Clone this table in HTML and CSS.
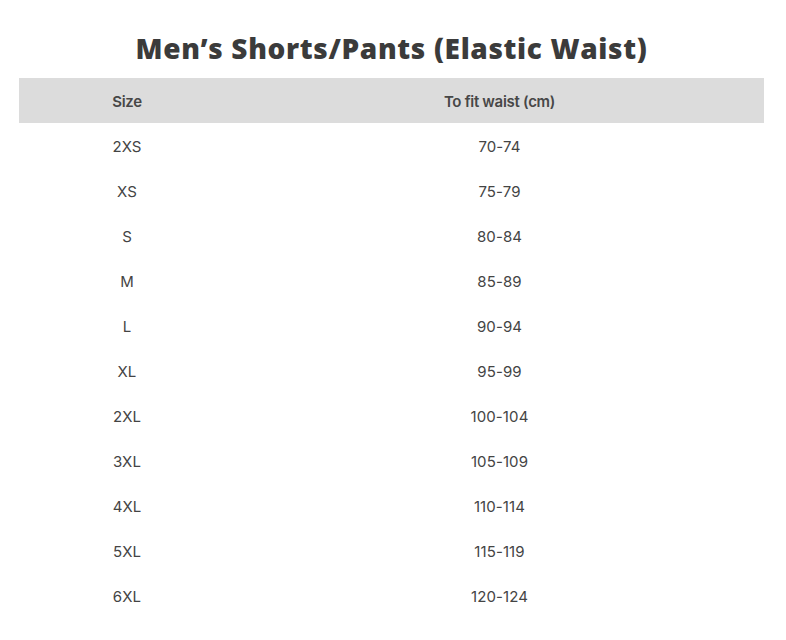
FILE: index.html
```html
<!DOCTYPE html>
<html>
<head>
<meta charset="utf-8">
<link rel="stylesheet" href="styles.css">
</head>
<body>
<div class="page">
  <h1 class="title">Men’s Shorts/Pants (Elastic Waist)</h1>
  <table class="chart">
    <thead>
      <tr><th class="col-size">Size</th><th>To fit waist (cm)</th></tr>
    </thead>
    <tbody>
      <tr><td>2XS</td><td>70-74</td></tr>
      <tr><td>XS</td><td>75-79</td></tr>
      <tr><td>S</td><td>80-84</td></tr>
      <tr><td>M</td><td>85-89</td></tr>
      <tr><td>L</td><td>90-94</td></tr>
      <tr><td>XL</td><td>95-99</td></tr>
      <tr><td>2XL</td><td>100-104</td></tr>
      <tr><td>3XL</td><td>105-109</td></tr>
      <tr><td>4XL</td><td>110-114</td></tr>
      <tr><td>5XL</td><td>115-119</td></tr>
      <tr><td>6XL</td><td>120-124</td></tr>
    </tbody>
  </table>
</div>
</body>
</html>
```
FILE: styles.css
```css
html, body {
  margin: 0;
  padding: 0;
  background: #fff;
}
.page {
  padding: 30px 22px 0 19px;
  font-family: Inter, "Open Sans", sans-serif;
  color: #444;
}
.title {
  margin: 0 0 11px 0;
  text-align: center;
  font-family: "Open Sans", Lato, sans-serif;
  font-weight: 800;
  font-size: 28px;
  line-height: 37px;
  color: #3b3b3b;
  letter-spacing: 0.65px;
}
.chart {
  width: 745px;
  border-collapse: collapse;
}
.chart th {
  background: #dcdcdc;
  height: 44px;
  padding: 1px 0 0 0;
  font-family: Inter, "Liberation Sans", sans-serif;
  font-weight: 600;
  font-size: 15px;
  letter-spacing: -0.3px;
  color: #474747;
  text-align: center;
}
.chart .col-size {
  width: 216px;
}
.chart td {
  height: 43px;
  padding: 2px 0 0 0;
  text-align: center;
  font-size: 15px;
  color: #444;
  letter-spacing: 0.1px;
}
```
